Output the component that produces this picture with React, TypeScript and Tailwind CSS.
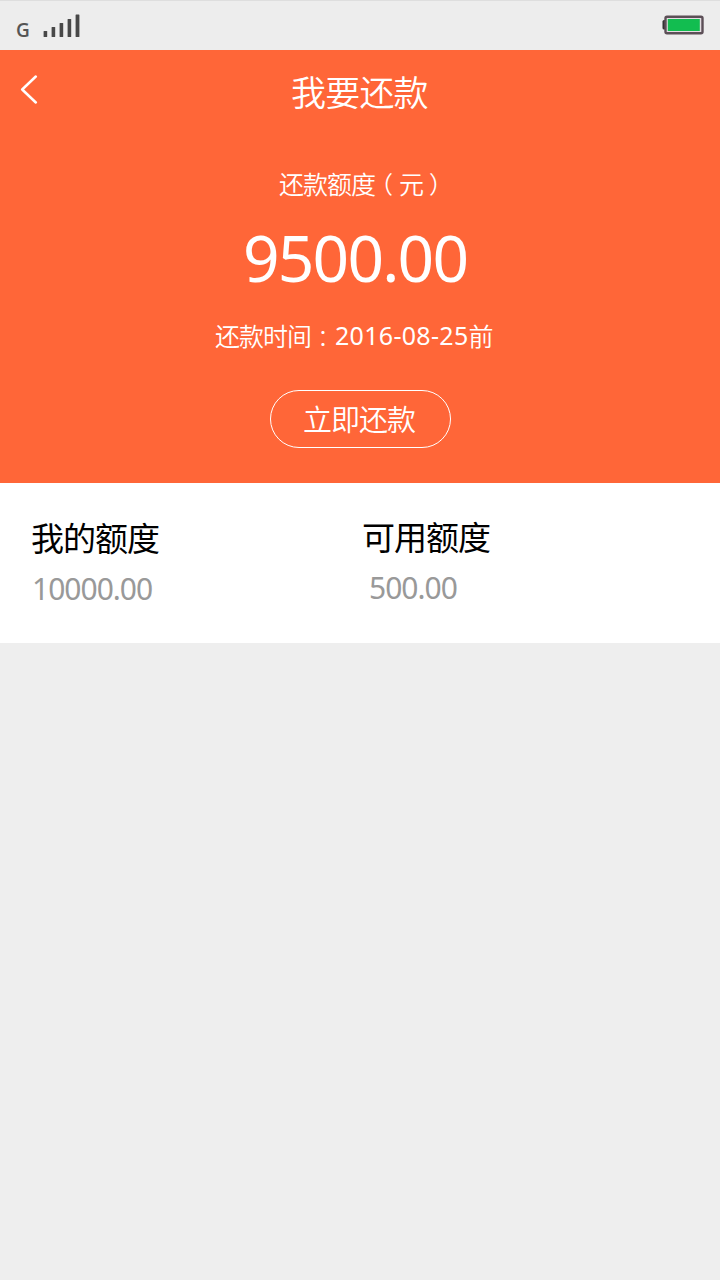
import React from 'react';

interface QuotaItem {
  label: string;
  amount: string;
  className: string;
  amountClassName: string;
}

const quotas: QuotaItem[] = [
  { label: '我的额度', amount: '10000.00', className: 'pl-[31px] w-[362px] pt-[35px]', amountClassName: 'pl-px' },
  { label: '可用额度', amount: '500.00', className: 'pt-[34px]', amountClassName: 'pl-[7px]' },
];

const StatusBar: React.FC = () => (
  <div className="flex h-[50px] items-center justify-between border-t border-[#dedede] bg-[#ededed] px-[15px]">
    <div className="flex items-center">
      <span className="mt-[9px] w-[28px] pl-px font-['Open_Sans',sans-serif] text-[19px] leading-5 font-semibold text-[#555]">G</span>
      {/* Signal strength */}
      <svg className="h-[48px] w-[40px]" viewBox="28 0 40 48" fill="#484848">
        <rect x="28.6" y="29" width="3.6" height="6" rx="0.5" />
        <rect x="36.6" y="25" width="3.6" height="10" rx="0.5" />
        <rect x="44.6" y="21" width="3.6" height="14" rx="0.5" />
        <rect x="52.6" y="17" width="3.6" height="18" rx="0.5" />
        <rect x="60.6" y="12.5" width="3.8" height="22.5" rx="0.5" />
      </svg>
    </div>
    <svg className="h-[48px] w-[43px]" viewBox="0 0 43 48" fill="none">
      <rect x="0.5" y="18" width="4" height="9.5" rx="1.5" fill="#333" />
      <rect x="3.5" y="14.8" width="37" height="16.4" rx="1.5" fill="#e4dde2" stroke="#5c4f57" strokeWidth="2.4" />
      <rect x="5.8" y="17" width="32" height="12" fill="#12bd50" />
    </svg>
  </div>
);

const App: React.FC = () => {
  return (
    <div className="min-h-screen w-[720px] bg-[#eeeeee] font-['Noto_Sans','Noto_Sans_CJK_SC',sans-serif]">
      <StatusBar />

      {/* Repayment summary */}
      <div className="flex h-[433px] flex-col bg-[#ff6638] font-[350] text-white">
        <header className="flex h-20 items-center pl-5">
          <svg className="h-[30px] w-5" viewBox="0 0 20 30" fill="none">
            <path d="M15.8 1.5L2.2 14.5L15.8 27.5" stroke="white" strokeWidth="2.5" strokeLinecap="round" strokeLinejoin="round" />
          </svg>
          <h1 className="ml-[251px] mt-[5px] text-[35px] leading-[50px] tracking-[-0.8px] font-[350]">我要还款</h1>
        </header>

        <p className="ml-[279px] mt-9 flex h-9 whitespace-nowrap text-[25px] leading-9 tracking-[-1px]">
          还款额度
          <span className="w-6 text-center text-2xl leading-9 tracking-normal [font-feature-settings:'halt']">（</span>元
          <span className="w-6 text-center text-2xl leading-9 tracking-normal [font-feature-settings:'halt']">）</span>
        </p>

        <p className="ml-[243px] mt-[12px] h-[88px] text-[64px] leading-[88px] font-normal tracking-[-1.8px]">9500.00</p>

        <p className="ml-[215px] mt-[16px] flex h-9 whitespace-nowrap text-[25px] leading-9 tracking-[-1px]">
          还款时间
          <span className="w-6 pt-px text-center text-2xl leading-9 font-light tracking-normal [font-feature-settings:'halt']">：</span>
          <span className="-mt-px text-[25px] font-normal tracking-[0.3px]">2016-08-25</span>前
        </p>

        <button className="ml-[270px] mt-[36px] h-[58px] w-[181px] rounded-full border border-white pt-[2px] pr-[3px] text-[29px] tracking-[-1px]">
          立即还款
        </button>
      </div>

      {/* Quota overview */}
      <div className="flex h-40 bg-white">
        {quotas.map((quota) => (
          <div key={quota.label} className={quota.className}>
            <div className="text-[33px] leading-[42px] tracking-[-1px] text-black">{quota.label}</div>
            <div className={`mt-[9px] text-[30px] leading-10 tracking-[-1px] text-[#999999] ${quota.amountClassName}`}>
              {quota.amount}
            </div>
          </div>
        ))}
      </div>
    </div>
  );
};

export default App;
